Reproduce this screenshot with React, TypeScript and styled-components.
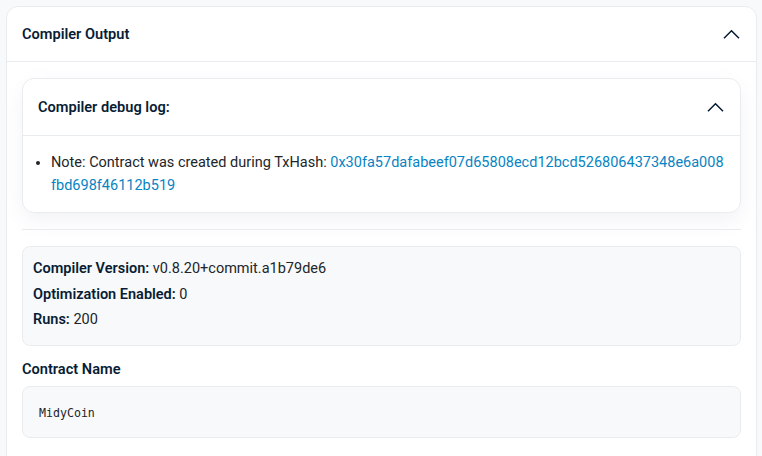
import React from "react";
import styled, { createGlobalStyle } from "styled-components";

const Global = createGlobalStyle`
  html, body { margin: 0; padding: 0; background: #f8f9fa; }
  body { font-family: Roboto, "Noto Sans", sans-serif; color: #212529; font-size: 15px; }
  * { box-sizing: border-box; }
`;

const Page = styled.div`
  padding: 6px 5px 0 6px;
`;

const Card = styled.section`
  background: #fff;
  border: 1px solid #e9ecef;
  border-radius: 12px;
  overflow: hidden;
`;

const CardHeader = styled.div<{ $h: number }>`
  display: flex;
  align-items: center;
  justify-content: space-between;
  height: ${(p) => p.$h}px;
  padding: 0 16px 0 15px;
  border-bottom: 1px solid #e9ecef;
`;

const Title = styled.h2`
  margin: 0;
  font-size: 14.6px;
  font-weight: 600;
  color: #081d35;
`;

const CardBody = styled.div`
  padding: 16px 15px 32px;
  display: flex;
  flex-direction: column;
`;

const InnerCard = styled.div`
  background: #fff;
  border: 1px solid #e9ecef;
  border-radius: 12px;
  box-shadow: 0 8px 20px rgba(189, 197, 209, 0.2);
`;

const List = styled.ul`
  margin: 0;
  padding: 15px 12px 15px 28px;
  font-size: 14.5px;
  line-height: 23px;
  color: #212529;
`;

const Link = styled.a`
  color: #0784c3;
  text-decoration: none;
  word-break: break-all;
`;

const Rule = styled.hr`
  border: 0;
  border-top: 1px solid #e9ecef;
  margin: 16px 0;
`;

const InfoBox = styled.div`
  background: #f8f9fa;
  border: 1px solid #e9ecef;
  border-radius: 8px;
  padding: 10px 10px 14px;
  display: flex;
  flex-direction: column;
  gap: 2.5px;
  font-size: 14.5px;
  line-height: 23px;
`;

const Strong = styled.b`
  font-weight: 600;
  color: #081d35;
`;

const Label = styled.h3`
  margin: 12px 0 6px;
  font-size: 14.6px;
  line-height: 22px;
  font-weight: 600;
  color: #081d35;
`;

const CodeBox = styled.pre`
  margin: 0;
  background: #f8f9fa;
  border: 1px solid #e9ecef;
  border-radius: 8px;
  padding: 18px 16px 15px;
  font-family: "DejaVu Sans Mono", monospace;
  font-size: 11.6px;
  line-height: 17px;
  color: #212529;
`;

const Chevron = ({ size = 17 }: { size?: number }) => (
  <svg width={size} height={size / 2 + 2} viewBox="0 0 17 10" fill="none">
    <path d="M1 9 L8.5 1.5 L16 9" stroke="#081d35" strokeWidth="1.5" />
  </svg>
);

export default function App() {
  return (
    <Page>
      <Global />
      <Card>
        <CardHeader $h={55}>
          <Title>Compiler Output</Title>
          <Chevron />
        </CardHeader>
        <CardBody>
          <InnerCard>
            <CardHeader $h={57}>
              <Title>Compiler debug log:</Title>
              <Chevron />
            </CardHeader>
            <List>
              <li>
                Note: Contract was created during TxHash:{" "}
                <Link href="#">0x30fa57dafabeef07d65808ecd12bcd526806437348e6a008fbd698f46112b519</Link>
              </li>
            </List>
          </InnerCard>
          <Rule />
          <InfoBox>
            <div>
              <Strong>Compiler Version:</Strong> v0.8.20+commit.a1b79de6
            </div>
            <div>
              <Strong>Optimization Enabled:</Strong> 0
            </div>
            <div>
              <Strong>Runs:</Strong> 200
            </div>
          </InfoBox>
          <Label>Contract Name</Label>
          <CodeBox>MidyCoin</CodeBox>
        </CardBody>
      </Card>
    </Page>
  );
}
